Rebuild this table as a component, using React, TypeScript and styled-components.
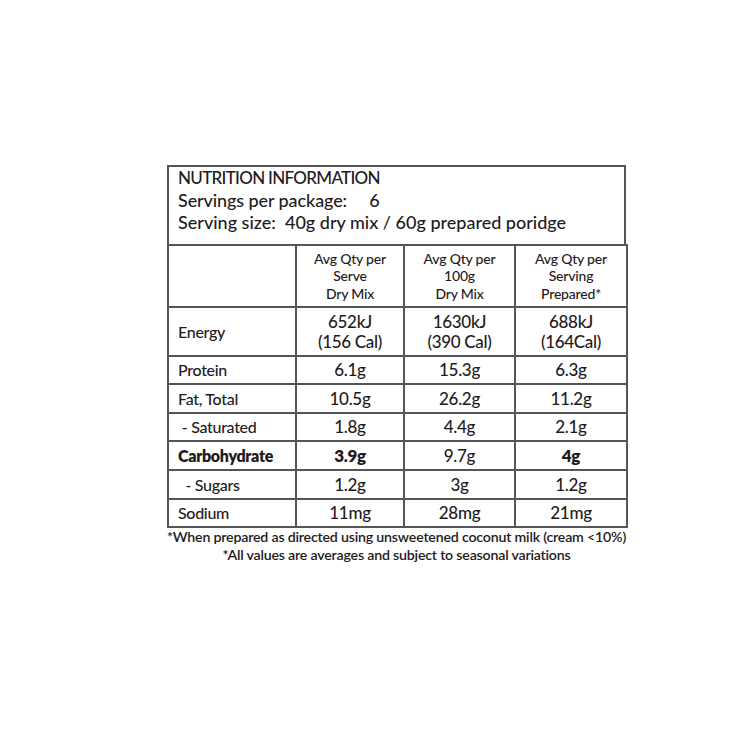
import React from 'react';
import styled, { createGlobalStyle } from 'styled-components';

const INK = '#1f1b1c';
const RULE = '#555';

const GlobalStyle = createGlobalStyle`
  html, body {
    margin: 0;
    padding: 0;
    background: #fff;
  }
  body {
    font-family: Lato, "Open Sans", sans-serif;
    font-weight: 500;
    color: ${INK};
  }
`;

const Page = styled.div`
  width: 750px;
  height: 750px;
  box-sizing: border-box;
  padding: 165px 0 0 167px;
`;

const Panel = styled.div`
  width: 459px;
`;

const Heading = styled.div`
  height: 79px;
  box-sizing: border-box;
  padding: 0 9px;
  border: 2px solid ${RULE};
  border-bottom: none;
`;

const HeadLine = styled.div<{ $size: number; $track: number }>`
  font-size: ${p => p.$size}px;
  line-height: 22px;
  white-space: pre;
  letter-spacing: ${p => p.$track}px;
`;

const Table = styled.table`
  width: 459px;
  border-collapse: collapse;
  table-layout: fixed;
`;

const Row = styled.tr<{ $h: number; $dashed?: boolean }>`
  height: ${p => p.$h}px;
  & > td {
    border-bottom-style: ${p => (p.$dashed ? 'dashed' : 'solid')};
  }
`;

const Cell = styled.td<{ $bold?: boolean }>`
  border: 2px solid ${RULE};
  padding: 0;
  text-align: center;
  vertical-align: middle;
  font-size: 17px;
  line-height: 20px;
  font-weight: ${p => (p.$bold ? 800 : 500)};
  letter-spacing: -0.3px;
`;

const HeadCell = styled(Cell)`
  font-size: 14px;
  line-height: 17.5px;
  letter-spacing: -0.2px;
`;

const Label = styled(Cell)`
  text-align: left;
  padding-left: 9px;
  font-size: 16px;
  white-space: pre;
`;

const Notes = styled.div`
  text-align: center;
  font-size: 14.2px;
  line-height: 18px;
  font-weight: 600;
  letter-spacing: -0.2px;
  white-space: nowrap;
`;

type Nutrient = {
  label: string;
  values: [string, string, string];
  h: number;
  dashed?: boolean;
  boldLabel?: boolean;
  boldValues?: [boolean, boolean, boolean];
};

const rows: Nutrient[] = [
  { label: 'Protein', values: ['6.1g', '15.3g', '6.3g'], h: 28 },
  { label: 'Fat, Total', values: ['10.5g', '26.2g', '11.2g'], h: 29, dashed: true },
  { label: ' - Saturated', values: ['1.8g', '4.4g', '2.1g'], h: 28 },
  {
    label: 'Carbohydrate',
    values: ['3.9g', '9.7g', '4g'],
    h: 29,
    dashed: true,
    boldLabel: true,
    boldValues: [true, false, true],
  },
  { label: '  - Sugars', values: ['1.2g', '3g', '1.2g'], h: 29 },
  { label: 'Sodium', values: ['11mg', '28mg', '21mg'], h: 28 },
];

export default function App() {
  return (
    <Page>
      <GlobalStyle />
      <Panel>
        <Heading>
          <HeadLine $size={17} $track={-0.7}>NUTRITION INFORMATION</HeadLine>
          <HeadLine $size={18} $track={-0.1}>{'Servings per package:     6'}</HeadLine>
          <HeadLine $size={18} $track={0}>{'Serving size:  40g dry mix / 60g prepared poridge'}</HeadLine>
        </Heading>
        <Table>
          <colgroup>
            <col style={{ width: 128 }} />
            <col style={{ width: 108 }} />
            <col style={{ width: 111 }} />
            <col style={{ width: 112 }} />
          </colgroup>
          <tbody>
            <Row $h={62}>
              <Cell />
              <HeadCell>
                Avg Qty per
                <br />
                Serve
                <br />
                Dry Mix
              </HeadCell>
              <HeadCell>
                Avg Qty per
                <br />
                100g
                <br />
                Dry Mix
              </HeadCell>
              <HeadCell>
                Avg Qty per
                <br />
                Serving
                <br />
                Prepared*
              </HeadCell>
            </Row>
            <Row $h={49}>
              <Label>Energy</Label>
              <Cell>
                652kJ
                <br />
                (156 Cal)
              </Cell>
              <Cell>
                1630kJ
                <br />
                (390 Cal)
              </Cell>
              <Cell>
                688kJ
                <br />
                (164Cal)
              </Cell>
            </Row>
            {rows.map(r => (
              <Row key={r.label} $h={r.h} $dashed={r.dashed}>
                <Label $bold={r.boldLabel}>{r.label}</Label>
                {r.values.map((v, i) => (
                  <Cell key={i} $bold={r.boldValues?.[i]}>
                    {v}
                  </Cell>
                ))}
              </Row>
            ))}
          </tbody>
        </Table>
        <Notes>
          *When prepared as directed using unsweetened coconut milk (cream &lt;10%)
          <br />
          *All values are averages and subject to seasonal variations
        </Notes>
      </Panel>
    </Page>
  );
}
